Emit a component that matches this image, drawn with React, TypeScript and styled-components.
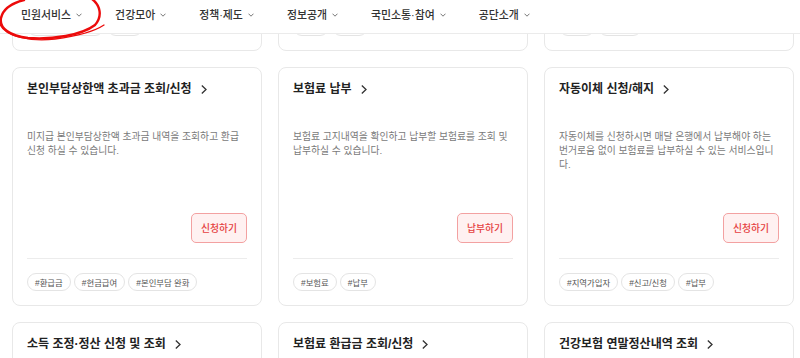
import React from "react";
import styled, { createGlobalStyle } from "styled-components";

const Global = createGlobalStyle`
  * { box-sizing: border-box; }
  html, body { margin: 0; padding: 0; background: #ffffff; }
  body {
    font-family: "Liberation Sans", "Noto Sans CJK KR", sans-serif;
    color: #222;
    -webkit-font-smoothing: antialiased;
  }
`;

const Page = styled.div`
  width: 800px;
  height: 358px;
  display: flex;
  flex-direction: column;
  overflow: hidden;
  background: #fff;
`;

const Header = styled.header`
  position: relative;
  z-index: 2;
  height: 34px;
  flex: none;
  display: flex;
  align-items: center;
  gap: 33px;
  padding: 0 0 4px 21px;
  background: #fff;
  border-bottom: 1px solid #ebebeb;
`;

const NavItem = styled.div`
  display: flex;
  align-items: center;
  gap: 5px;
  font-size: 10.9px;
  font-weight: 500;
  color: #333;
  line-height: 14px;
  white-space: nowrap;
`;

const Annotation = styled.svg`
  position: absolute;
  left: 0;
  top: 0;
  width: 110px;
  height: 48px;
  overflow: visible;
  pointer-events: none;
`;

const Viewport = styled.main`
  flex: 1;
  overflow: hidden;
`;

const Grid = styled.div`
  display: grid;
  grid-template-columns: repeat(3, 250px);
  column-gap: 16px;
  row-gap: 16px;
  padding: 0 6px 0 12px;
  margin-top: -222px;
`;

const Card = styled.article`
  height: 239px;
  display: flex;
  flex-direction: column;
  padding: 12px 14px 14px;
  border: 1px solid #e8e8e8;
  border-radius: 8px;
  background: #fff;
`;

const Title = styled.h3`
  margin: 0;
  display: flex;
  align-items: center;
  gap: 9px;
  font-size: 12px;
  line-height: 18px;
  font-weight: 700;
  color: #222;
  white-space: nowrap;
`;

const Desc = styled.p`
  margin: 32px 0 0;
  font-size: 9.8px;
  line-height: 14px;
  color: #7a7a7a;
  word-break: break-all;
`;

const ActionRow = styled.div`
  margin-top: auto;
  display: flex;
  justify-content: flex-end;
`;

const ActionButton = styled.button`
  height: 30px;
  padding: 0 9px;
  border: 1px solid #f3a1a1;
  border-radius: 5px;
  background: #fff1f1;
  color: #e5403f;
  font-family: inherit;
  font-size: 9.8px;
  font-weight: 500;
  cursor: pointer;
`;

const Divider = styled.hr`
  margin: 15px 0 0;
  border: 0;
  border-top: 1px solid #ececec;
  height: 0;
`;

const Tags = styled.div`
  margin-top: 14px;
  display: flex;
  gap: 3px;
`;

const Tag = styled.span`
  height: 18px;
  display: inline-flex;
  align-items: center;
  padding: 0 7px;
  border: 1px solid #e4e4e4;
  border-radius: 9px;
  font-size: 8.4px;
  color: #555;
  white-space: nowrap;
`;

const ChevronDown = () => (
  <svg width="6" height="4" viewBox="0 0 6 4" fill="none">
    <path d="M0.5 0.7 L3 3.2 L5.5 0.7" stroke="#666" strokeWidth="0.9" />
  </svg>
);

const ChevronRight = () => (
  <svg width="6" height="9" viewBox="0 0 6 9" fill="none">
    <path d="M0.8 0.6 L5 4.5 L0.8 8.4" stroke="#333" strokeWidth="1.3" />
  </svg>
);

type Service = {
  title: string;
  desc: string;
  action: string;
  tags: string[];
};

const services: Service[] = [
  { title: "자격득실 확인서 발급", desc: "건강보험 자격 취득 및 상실 내역을 확인하고 확인서를 발급받으실 수 있습니다.", action: "발급하기", tags: ["#자격득실 확인서", "#발급"] },
  { title: "보험료 납부확인서", desc: "납부하신 보험료 내역을 조회하고 확인서를 출력하실 수 있습니다.", action: "조회하기", tags: ["#조회", "#출력"] },
  { title: "증명서 팩스 신청", desc: "각종 증명서를 팩스로 받아보실 수 있습니다.", action: "신청하기", tags: ["#팩스", "#증명서"] },
  { title: "본인부담상한액 초과금 조회/신청", desc: "미지급 본인부담상한액 초과금 내역을 조회하고 환급 신청 하실 수 있습니다.", action: "신청하기", tags: ["#환급금", "#현금급여", "#본인부담 완화"] },
  { title: "보험료 납부", desc: "보험료 고지내역을 확인하고 납부할 보험료를 조회 및 납부하실 수 있습니다.", action: "납부하기", tags: ["#보험료", "#납부"] },
  { title: "자동이체 신청/해지", desc: "자동이체를 신청하시면 매달 은행에서 납부해야 하는 번거로움 없이 보험료를 납부하실 수 있는 서비스입니다.", action: "신청하기", tags: ["#지역가입자", "#신고/신청", "#납부"] },
  { title: "소득 조정·정산 신청 및 조회", desc: "소득 조정 및 정산 신청 내역을 조회하실 수 있습니다.", action: "신청하기", tags: ["#소득", "#정산"] },
  { title: "보험료 환급금 조회/신청", desc: "과오납된 보험료 환급금을 조회하고 신청하실 수 있습니다.", action: "신청하기", tags: ["#환급금", "#보험료"] },
  { title: "건강보험 연말정산내역 조회", desc: "연말정산 시 필요한 건강보험료 납부 내역을 조회하실 수 있습니다.", action: "조회하기", tags: ["#연말정산", "#조회"] },
];

const menus = ["민원서비스", "건강모아", "정책·제도", "정보공개", "국민소통·참여", "공단소개"];

export default function App() {
  return (
    <>
      <Global />
      <Page>
        <Header>
          {menus.map((m) => (
            <NavItem key={m}>
              {m}
              <ChevronDown />
            </NavItem>
          ))}
          <Annotation viewBox="0 0 110 48">
            <path
              d="M92 -1 C100 5, 103 16, 95 25 C82 35, 52 40, 28 38 C10 36, -1 28, 1 18 C3 9, 12 3, 24 0"
              stroke="#ec0b0b"
              strokeWidth="2.4"
              fill="none"
              strokeLinecap="round"
            />
            <path
              d="M0 24 C4 36, 30 42, 55 39 C78 36, 95 31, 104 25"
              stroke="#ec0b0b"
              strokeWidth="1.3"
              fill="none"
              strokeLinecap="round"
            />
          </Annotation>
        </Header>
        <Viewport>
          <Grid>
            {services.map((s) => (
              <Card key={s.title}>
                <Title>
                  {s.title}
                  <ChevronRight />
                </Title>
                <Desc>{s.desc}</Desc>
                <ActionRow>
                  <ActionButton>{s.action}</ActionButton>
                </ActionRow>
                <Divider />
                <Tags>
                  {s.tags.map((t) => (
                    <Tag key={t}>{t}</Tag>
                  ))}
                </Tags>
              </Card>
            ))}
          </Grid>
        </Viewport>
      </Page>
    </>
  );
}
